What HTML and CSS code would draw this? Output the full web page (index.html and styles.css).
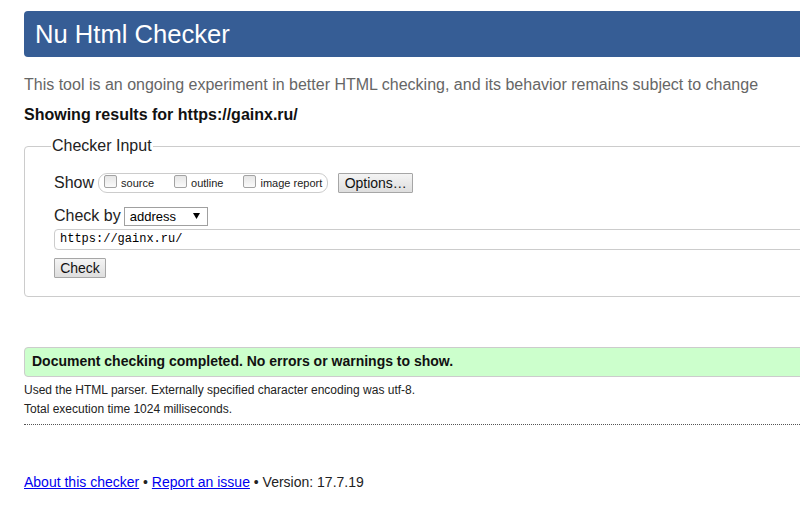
FILE: index.html
```html
<!DOCTYPE html>
<html lang="en">
<head>
<meta charset="utf-8">
<title>Showing results for https://gainx.ru/ - Nu Html Checker</title>
<link rel="stylesheet" href="styles.css">
</head>
<body>
<div class="page">
  <h1 class="title">Nu Html Checker</h1>
  <p class="subtitle">This tool is an ongoing experiment in better HTML checking, and its behavior remains subject to change</p>
  <p class="showing">Showing results for https://gainx.ru/</p>

  <fieldset class="checker">
    <legend class="checker-legend">Checker Input</legend>
    <div class="row show-row">
      <span class="row-label">Show</span>
      <span class="pill">
        <label class="opt"><span class="box"></span><span>source</span></label>
        <label class="opt"><span class="box"></span><span>outline</span></label>
        <label class="opt"><span class="box"></span><span>image report</span></label>
      </span>
      <span class="btn options-btn">Options…</span>
    </div>
    <div class="row checkby-row">
      <span class="row-label">Check by</span>
      <span class="select"><span class="select-text">address</span><svg class="arrow" width="7" height="6" viewBox="0 0 7 6"><polygon points="0,0 7,0 3.5,6" fill="#000"/></svg></span>
    </div>
    <div class="url-input">https://gainx.ru/</div>
    <span class="btn check-btn">Check</span>
  </fieldset>

  <div class="success">Document checking completed. No errors or warnings to show.</div>
  <div class="details">
    <p class="detail">Used the HTML parser. Externally specified character encoding was utf-8.</p>
    <p class="detail">Total execution time 1024 milliseconds.</p>
  </div>

  <p class="footer"><a href="#" class="flink">About this checker</a> • <a href="#" class="flink">Report an issue</a> • Version: 17.7.19</p>
</div>
</body>
</html>
```
FILE: styles.css
```css
html, body {
  margin: 0;
  padding: 0;
  overflow: hidden;
  background: #fff;
}
body {
  font-family: "Liberation Sans", Arial, sans-serif;
  color: #222;
  padding: 11px 0 0 24px;
}
.page {
  width: 1100px;
}
.title {
  margin: 0;
  height: 46px;
  line-height: 46px;
  padding-left: 11px;
  font-size: 25.6px;
  font-weight: normal;
  color: #fff;
  background: #365d95;
  border-radius: 4px 0 0 4px;
}
.subtitle {
  margin: 19px 0 0;
  font-size: 16px;
  line-height: 18px;
  color: #666;
}
.showing {
  margin: 12px 0 0;
  font-size: 16px;
  line-height: 18px;
  font-weight: bold;
  color: #111;
}
.checker {
  margin: 13px 0 0;
  border: 1px solid #ccc;
  border-radius: 4px;
  padding: 18px 0 18px 29px;
  min-width: 0;
}
.checker-legend {
  font-size: 16px;
  line-height: 18px;
  padding: 0 1px;
  margin-left: -3px;
  color: #222;
}
.row {
  display: flex;
  align-items: center;
  height: 20px;
}
.row-label {
  font-size: 16px;
  line-height: 18px;
  color: #222;
}
.pill {
  display: flex;
  align-items: center;
  height: 18px;
  margin-left: 4px;
  border: 1px solid #ccc;
  border-radius: 9px;
  padding: 0 5px;
  gap: 20px;
}
.opt {
  display: flex;
  align-items: center;
  font-size: 11px;
  color: #222;
}
.box {
  width: 11px;
  height: 11px;
  border: 1px solid #a3a3a3;
  border-radius: 2px;
  background: linear-gradient(#e6e6e6, #fafafa);
  margin-right: 4px;
  margin-top: -3px;
}
.btn {
  display: inline-flex;
  align-items: center;
  justify-content: center;
  box-sizing: border-box;
  height: 20px;
  border: 1px solid #a6a6a6;
  border-radius: 1px;
  background: linear-gradient(#f4f4f4, #dedede);
  font-size: 14px;
  color: #111;
}
.options-btn {
  width: 75px;
  margin-left: 10px;
}
.checkby-row {
  margin-top: 13px;
}
.select {
  display: flex;
  align-items: center;
  justify-content: space-between;
  box-sizing: border-box;
  width: 84px;
  height: 19px;
  margin-left: 3px;
  border: 1px solid #a0a0a0;
  background: #fff;
  padding: 0 7px 0 5px;
  font-size: 13px;
  color: #000;
}
.arrow {
  display: block;
}
.url-input {
  margin-top: 3px;
  box-sizing: border-box;
  height: 21px;
  border: 1px solid #ccc;
  border-radius: 4px;
  padding-left: 5px;
  font-family: "Liberation Mono", "DejaVu Sans Mono", monospace;
  font-size: 12px;
  line-height: 19px;
  color: #000;
}
.check-btn {
  width: 52px;
  margin-top: 8px;
}
.success {
  margin-top: 50px;
  border: 1px solid #ccc;
  border-radius: 4px;
  background: #ccffcc;
  padding: 5px 7px 6px;
  font-size: 14px;
  line-height: 17px;
  font-weight: bold;
  color: #111;
}
.details {
  margin-top: 4px;
  padding-bottom: 5px;
  border-bottom: 1px dotted #555;
}
.detail {
  margin: 0;
  font-size: 12px;
  line-height: 19px;
  color: #222;
}
.footer {
  margin: 49px 0 0;
  font-size: 14px;
  line-height: 16px;
  color: #222;
}
.flink {
  color: #0000ee;
  text-decoration: underline;
}
```
